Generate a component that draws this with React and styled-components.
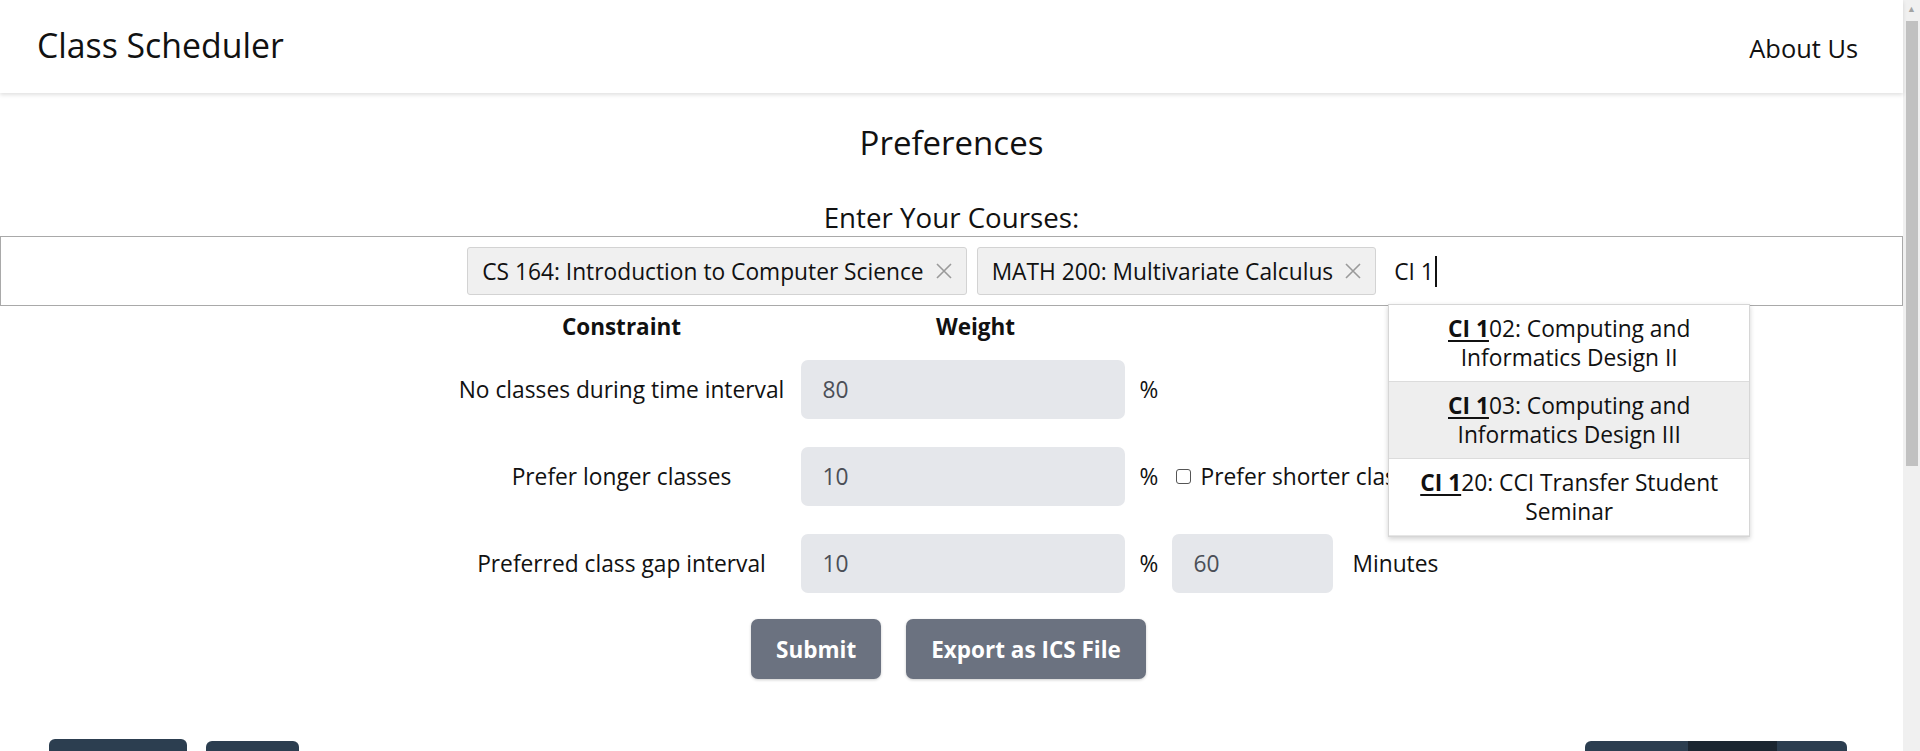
import React from "react";
import styled, { createGlobalStyle } from "styled-components";

const Global = createGlobalStyle`
  html, body {
    margin: 0;
    padding: 0;
    height: 100%;
    overflow: hidden;
    background: #ffffff;
    font-family: "Open Sans", "Noto Sans", sans-serif;
    color: #111;
  }
  * { box-sizing: border-box; }
`

const Shell = styled.div`
  display: flex;
  flex-direction: row;
  width: 100vw;
  height: 100vh;
  overflow: hidden;
`
const Page = styled.div`
  flex: 1;
  min-width: 0;
  display: flex;
  flex-direction: column;
  & > * { flex-shrink: 0; }
`
const Header = styled.header`
  height: 93px;
  display: flex;
  align-items: center;
  justify-content: space-between;
  padding: 0 45px 0 37px;
  box-shadow: 0 2px 4px rgba(0, 0, 0, 0.12);
  position: relative;
  z-index: 2;
`
const Brand = styled.div`
  font-size: 33.8px;
  font-weight: 400;
  margin-top: -3px;
`
const NavLink = styled.a`
  font-size: 25.4px;
  color: #111;
  text-decoration: none;
  margin-top: 2px;
`
const Main = styled.main`
  display: flex;
  flex-direction: column;
  align-items: center;
`
const Title = styled.h2`
  font-size: 33px;
  font-weight: 400;
  margin: 29px 0 0;
  line-height: 42px;
`
const FieldLabel = styled.div`
  font-size: 27.7px;
  margin-top: 36px;
  line-height: 34px;
`
const CourseBox = styled.div`
  width: 100%;
  height: 70px;
  margin-top: 2px;
  border: 1px solid #a9a9a9;
  display: flex;
  align-items: center;
  justify-content: center;
  gap: 10px;
  padding-left: 7px;
`
const Chip = styled.div`
  height: 48px;
  display: flex;
  align-items: center;
  gap: 10px;
  padding: 0 12px 0 14px;
  background: #f0f0f0;
  border: 1px solid #d3d3d3;
  border-radius: 3px;
  font-size: 22.75px;
`
const Remove = styled.span`
  display: flex;
  align-items: center;
  color: #9a9a9a;
`
const Typing = styled.div`
  position: relative;
  margin-left: 2px;
  padding: 0 6px;
  font-size: 22.75px;
  display: flex;
  align-items: center;
`
const Caret = styled.span`
  display: inline-block;
  width: 2px;
  height: 31px;
  background: #111;
  margin-left: 1px;
`
const Menu = styled.ul`
  position: absolute;
  top: 48px;
  left: 0px;
  width: 362px;
  margin: 0;
  padding: 0;
  list-style: none;
  background: #fff;
  border: 1px solid #d6d6d6;
  box-shadow: 0 2px 5px rgba(0, 0, 0, 0.18);
  z-index: 5;
`
const MenuItem = styled.li`
  height: 77px;
  display: flex;
  align-items: center;
  justify-content: center;
  text-align: center;
  padding: 0 16px;
  font-size: 22.75px;
  line-height: 29px;
  background: ${(p) => (p.active ? "#eeeeee" : "#fff")};
  border-bottom: 1px solid #dcdcdc;
  &:last-child { border-bottom: 1px solid #e6e6e6; }
`
const Match = styled.span`
  font-weight: 700;
  text-decoration: underline;
  text-underline-offset: 3px;
`
const Table = styled.div`
  display: grid;
  grid-template-columns: 338px 370px 290px;
  align-items: center;
`
const HeadCell = styled.div`
  height: 40px;
  display: flex;
  align-items: center;
  justify-content: center;
  font-weight: 700;
  font-size: 22.5px;
`
const LabelCell = styled.div`
  height: 87px;
  display: flex;
  align-items: center;
  justify-content: center;
  font-size: 22.75px;
  white-space: nowrap;
`
const WeightCell = styled.div`
  height: 87px;
  display: flex;
  align-items: center;
  padding-left: 10px;
  gap: 15px;
  font-size: 22.75px;
`
const ExtraCell = styled.div`
  height: 87px;
  display: flex;
  align-items: center;
  gap: ${(p) => p.gap || 10}px;
  padding-left: ${(p) => p.pad || 0}px;
  font-size: 22.75px;
  white-space: nowrap;
`
const NumberBox = styled.div`
  width: ${(p) => p.w || 324}px;
  height: 59px;
  background: #e5e7eb;
  border-radius: 7px;
  display: flex;
  align-items: center;
  padding-left: 22px;
  color: #4b4f57;
  font-size: 22.75px;
`
const Check = styled.span`
  width: 15px;
  height: 15px;
  border: 1.5px solid #555;
  border-radius: 3px;
  background: #fff;
`
const Actions = styled.div`
  display: flex;
  gap: 25px;
  margin-top: 12px;
  margin-right: 6px;
`
const Button = styled.button`
  height: 60px;
  padding: 0 25px;
  border: none;
  border-radius: 7px;
  background: #6b7280;
  color: #fff;
  font-family: "Open Sans", "Noto Sans", sans-serif;
  font-weight: 700;
  font-size: 22.5px;
  box-shadow: 0 1px 3px rgba(0, 0, 0, 0.2);
`
const Footer = styled.div`
  display: flex;
  justify-content: space-between;
  align-items: flex-start;
  padding: 0 56px 0 49px;
  margin-top: 60px;
`
const FooterGroup = styled.div`
  display: flex;
  align-items: flex-start;
  gap: ${(p) => p.gap || 0}px;
`
const DarkButton = styled.div`
  width: ${(p) => p.w}px;
  height: 40px;
  margin-top: ${(p) => p.top || 0}px;
  background: ${(p) => (p.active ? "#1b2631" : "#2c3e50")};
  border-radius: ${(p) => p.radius || "6px"};
`
const Track = styled.div`
  width: 17px;
  height: 100vh;
  background: #f0f0f0;
  display: flex;
  flex-direction: column;
  align-items: center;
`
const Arrow = styled.div`
  height: 17px;
  display: flex;
  align-items: center;
  justify-content: center;
  color: #a3a3a3;
  font-size: 9px;
`
const Thumb = styled.div`
  width: 12px;
  height: 445px;
  margin-top: 4px;
  background: #c1c1c1;
`

const Close = () => (
  <svg width="20" height="20" viewBox="0 0 20 20">
    <path d="M3 3 L17 17 M17 3 L3 17" stroke="currentColor" strokeWidth="1.6" fill="none" />
  </svg>
)

const App = () => {
  return (
    <>
      <Global />
      <Shell>
        <Page>
          <Header>
            <Brand>Class Scheduler</Brand>
            <NavLink href="#">About Us</NavLink>
          </Header>
          <Main>
            <Title>Preferences</Title>
            <FieldLabel>Enter Your Courses:</FieldLabel>
            <CourseBox>
              <Chip>
                CS 164: Introduction to Computer Science
                <Remove><Close /></Remove>
              </Chip>
              <Chip>
                MATH 200: Multivariate Calculus
                <Remove><Close /></Remove>
              </Chip>
              <Typing>
                CI 1<Caret />
                <Menu>
                  <MenuItem>
                    <span><Match>CI 1</Match>02: Computing and Informatics Design II</span>
                  </MenuItem>
                  <MenuItem active>
                    <span><Match>CI 1</Match>03: Computing and Informatics Design III</span>
                  </MenuItem>
                  <MenuItem>
                    <span><Match>CI 1</Match>20: CCI Transfer Student Seminar</span>
                  </MenuItem>
                </Menu>
              </Typing>
            </CourseBox>

            <Table>
              <HeadCell>Constraint</HeadCell>
              <HeadCell>Weight</HeadCell>
              <HeadCell />

              <LabelCell>No classes during time interval</LabelCell>
              <WeightCell><NumberBox>80</NumberBox>%</WeightCell>
              <ExtraCell />

              <LabelCell>Prefer longer classes</LabelCell>
              <WeightCell><NumberBox>10</NumberBox>%</WeightCell>
              <ExtraCell pad={15}><Check />Prefer shorter classes</ExtraCell>

              <LabelCell>Preferred class gap interval</LabelCell>
              <WeightCell><NumberBox>10</NumberBox>%</WeightCell>
              <ExtraCell pad={11} gap={20}><NumberBox w={161}>60</NumberBox>Minutes</ExtraCell>
            </Table>

            <Actions>
              <Button>Submit</Button>
              <Button>Export as ICS File</Button>
            </Actions>
          </Main>
          <Footer>
            <FooterGroup gap={19}>
              <DarkButton w={138} />
              <DarkButton w={93} top={2} />
            </FooterGroup>
            <FooterGroup>
              <DarkButton w={103} top={2} radius="6px 0 0 6px" />
              <DarkButton w={89} top={2} active radius="0" />
              <DarkButton w={70} top={2} radius="0 6px 6px 0" />
            </FooterGroup>
          </Footer>
        </Page>
        <Track>
          <Arrow>▲</Arrow>
          <Thumb />
        </Track>
      </Shell>
    </>
  )
}
export default App;
